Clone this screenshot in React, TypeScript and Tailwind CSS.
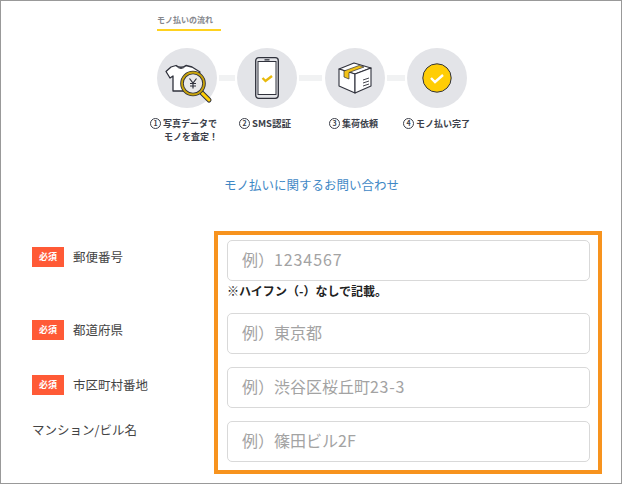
const font = "font-['Noto_Sans_CJK_JP','Noto_Sans',sans-serif]";

function Circle({ children }: { children: React.ReactNode }) {
  return (
    <div className="w-[60px] h-[60px] rounded-full bg-[#e3e4e8] flex items-center justify-center shrink-0">
      {children}
    </div>
  );
}

function Line({ width }: { width: string }) {
  return <div className={`${width} h-[6px] bg-[#f1f2f3]`} />;
}

function Num({ n }: { n: number }) {
  return (
    <span className="w-[11px] h-[11px] rounded-full border border-[#3c3f4a] flex items-center justify-center text-[7px] leading-none font-bold shrink-0">
      {n}
    </span>
  );
}

function ShirtIcon() {
  return (
    <svg width="60" height="60" viewBox="0 0 60 60">
      <path d="M19 17.5 Q24 21 29 17.5 L35 19 L43 24 L39.5 30 L36 28 L36 43 L16 43 L16 28 L13 30 L9 23.5 L14 19 Z" fill="#fff" stroke="#30323c" strokeWidth="1.3" strokeLinejoin="round" />
      <path d="M19 17.5 Q24 23.5 29 17.5" fill="none" stroke="#30323c" strokeWidth="1" />
      <path d="M45 45 L52 52" stroke="#30323c" strokeWidth="5" strokeLinecap="round" />
      <path d="M45 45 L52 52" stroke="#ffcd05" strokeWidth="3" strokeLinecap="round" />
      <circle cx="36" cy="35.5" r="11" fill="#e9e9ea" stroke="#30323c" strokeWidth="3.6" />
      <circle cx="36" cy="35.5" r="11" fill="none" stroke="#c9a40c" strokeWidth="1.8" />
      <path d="M32.5 30.5 L36 35 L39.5 30.5 M36 35 V40.5 M33 35.5 H39 M33 38 H39" fill="none" stroke="#30323c" strokeWidth="1.2" />
    </svg>
  );
}

function PhoneIcon() {
  return (
    <svg width="24" height="42" viewBox="0 0 24 42">
      <rect x="0.7" y="0.7" width="22.6" height="40.6" rx="3" fill="#e3e4e8" stroke="#30323c" strokeWidth="1.3" />
      <rect x="3" y="4.5" width="18" height="33" fill="#fff" stroke="#30323c" strokeWidth="1" />
      <rect x="9.5" y="2.2" width="5" height="1.3" fill="#30323c" />
      <path d="M7.5 21 L10.5 24 L17 19" fill="none" stroke="#e8b90c" strokeWidth="2.4" />
    </svg>
  );
}

function BoxIcon() {
  return (
    <svg width="34" height="32" viewBox="0 0 34 32">
      <path d="M1 7 L16 1 L33 6 L17 12 Z" fill="#fff" stroke="#30323c" strokeWidth="1.1" strokeLinejoin="round" />
      <path d="M1 7 L17 12 L17 31 L1 24 Z" fill="#fff" stroke="#30323c" strokeWidth="1.1" strokeLinejoin="round" />
      <path d="M17 12 L33 6 L33 24 L17 31 Z" fill="#fff" stroke="#30323c" strokeWidth="1.1" strokeLinejoin="round" />
      <path d="M6 9 L21 3.5 L26 5 L11 10.5 L11 17 L6 15 Z" fill="#f2c218" stroke="#30323c" strokeWidth="0.7" />
      <path d="M25 18 L31 16 M25 21 L31 19 M25 24 L31 22" stroke="#30323c" strokeWidth="0.9" />
    </svg>
  );
}

function DoneIcon() {
  return (
    <svg width="30" height="30" viewBox="0 0 30 30">
      <circle cx="15" cy="15" r="14.2" fill="#ffcd05" stroke="#30323c" strokeWidth="1" />
      <path d="M9 15 L13 19 L21 12" fill="none" stroke="#fff" strokeWidth="2.4" />
    </svg>
  );
}

function Required() {
  return (
    <span className="w-[32px] h-[20px] bg-[#ff5a36] text-white text-[9px] font-bold flex items-center justify-center shrink-0">
      必須
    </span>
  );
}

function Field({ label, required, rowClass }: { label: string; required?: boolean; rowClass: string }) {
  return (
    <div className={`flex items-center gap-[9px] ${rowClass}`}>
      {required && <Required />}
      <span className="text-[12.5px] text-[#444] whitespace-nowrap">{label}</span>
    </div>
  );
}

function InputBox({ text, latin, latinClass }: { text: string; latin?: string; latinClass?: string }) {
  return (
    <div className="h-[41px] w-[363px] rounded-[5px] border border-[#d9d9d9] flex items-center pl-[14px] pb-[3px] text-[16px] text-[#a3a3a3]">
      {text}
      {latin && <span className={latinClass}>{latin}</span>}
    </div>
  );
}

export default function App() {
  return (
    <div className={`w-[622px] h-[484px] bg-white border border-[#999] overflow-hidden ${font}`}>
      <div className="pl-[156px] pt-[12px] text-[#3c3f4a]">
        <div className="w-[64px] h-[18px] border-b-2 border-[#ffd21f] text-[8px] font-bold text-[#85878d] leading-[14px] whitespace-nowrap">
          モノ払いの流れ
        </div>

        <div className="flex items-center mt-[17px]">
          <Circle><ShirtIcon /></Circle>
          <div className="mx-[2px]"><Line width="w-[16px]" /></div>
          <Circle><PhoneIcon /></Circle>
          <div className="ml-[2px] mr-[3px]"><Line width="w-[23px]" /></div>
          <Circle><BoxIcon /></Circle>
          <div className="mx-[2px]"><Line width="w-[18px]" /></div>
          <Circle><DoneIcon /></Circle>
        </div>

        <div className="flex mt-[9px] text-[9px] font-bold leading-[13px] -ml-[7px]">
          <div className="w-[89px] shrink-0">
            <div className="flex items-center gap-[2px] whitespace-nowrap"><Num n={1} />写真データで</div>
            <div className="pl-[14px] whitespace-nowrap">モノを査定！</div>
          </div>
          <div className="w-[90px] shrink-0 flex items-start">
            <div className="flex items-center gap-[2px] whitespace-nowrap text-[9.5px]"><Num n={2} />SMS認証</div>
          </div>
          <div className="w-[74px] shrink-0">
            <div className="flex items-center gap-[2px] whitespace-nowrap"><Num n={3} />集荷依頼</div>
          </div>
          <div className="shrink-0">
            <div className="flex items-center gap-[2px] whitespace-nowrap"><Num n={4} />モノ払い完了</div>
          </div>
        </div>
      </div>

      <div className="mt-[33px] pl-[223px] text-[12.5px] leading-[18px] text-[#3f88c5]">モノ払いに関するお問い合わせ</div>

      <div className="flex mt-[37px]">
        <div className="w-[213px] pl-[31px] shrink-0">
          <Field label="郵便番号" required rowClass="mt-[16px]" />
          <Field label="都道府県" required rowClass="mt-[53px]" />
          <Field label="市区町村番地" required rowClass="mt-[35px]" />
          <Field label="マンション/ビル名" rowClass="mt-[26px]" />
        </div>
        <div className="w-[388px] h-[243px] border-4 border-[#f7931e] pl-[9px] pt-[5px] shrink-0">
          <InputBox text="例）" latin="1234567" latinClass="tracking-[0.9px]" />
          <div className="h-[32px] text-[12px] font-bold text-[#222] leading-[20px] whitespace-nowrap">※ハイフン（-）なしで記載。</div>
          <InputBox text="例）東京都" />
          <div className="h-[13px]" />
          <InputBox text="例）渋谷区桜丘町" latin="23-3" latinClass="tracking-[0.7px]" />
          <div className="h-[13px]" />
          <InputBox text="例）篠田ビル2F" />
        </div>
      </div>
    </div>
  );
}
